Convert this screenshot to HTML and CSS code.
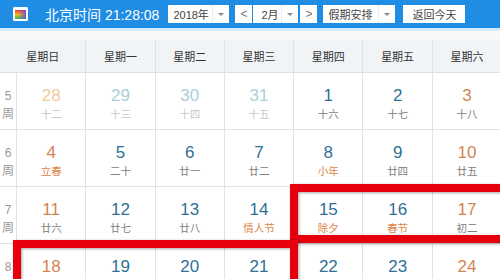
FILE: index.html
```html
<!DOCTYPE html>
<html lang="zh-CN">
<head>
    <meta charset="UTF-8">
    <meta name="viewport" content="width=device-width, initial-scale=1.0">
    <title>万年历</title>
    <link rel="stylesheet" href="styles.css">
</head>
<body>
    <div class="page">
        <div class="topbar">
            <svg class="logo" viewBox="0 0 15 14">
                <defs>
                    <linearGradient id="lg-v" x1="0" y1="0" x2="0" y2="1">
                        <stop offset="0" stop-color="#ef3550"/>
                        <stop offset="0.5" stop-color="#f6b81a"/>
                        <stop offset="1" stop-color="#33b65a"/>
                    </linearGradient>
                    <linearGradient id="lg-h" x1="0" y1="0" x2="1" y2="0">
                        <stop offset="0.3" stop-color="#5a4fe0" stop-opacity="0"/>
                        <stop offset="1" stop-color="#5a4fe0" stop-opacity="0.85"/>
                    </linearGradient>
                </defs>
                <rect x="0" y="0" width="15" height="14" rx="1.5" fill="#fff"/>
                <rect x="2" y="3" width="11" height="9" fill="url(#lg-v)"/>
                <rect x="2" y="3" width="11" height="9" fill="url(#lg-h)"/>
            </svg>
            <span class="clock">北京时间 21:28:08</span>

            <div class="select year">
                <span class="val">2018年</span>
                <span class="arrow"></span>
            </div>

            <div class="month-group">
                <button class="nav">&lt;</button>
                <div class="select month">
                    <span class="val">2月</span>
                    <span class="arrow"></span>
                </div>
                <button class="nav">&gt;</button>
            </div>

            <div class="select holiday">
                <span class="val">假期安排</span>
                <span class="arrow"></span>
            </div>

            <button class="today">返回今天</button>
        </div>

        <div class="strip"></div>

        <div class="calendar">
            <div class="weekdays">
                <div>星期日</div>
                <div>星期一</div>
                <div>星期二</div>
                <div>星期三</div>
                <div>星期四</div>
                <div>星期五</div>
                <div>星期六</div>
            </div>

            <div class="week">
                <div class="weeknum"><span>5</span><span>周</span></div>
                <div class="day weekend other"><div class="num">28</div><div class="lunar">十二</div></div>
                <div class="day other"><div class="num">29</div><div class="lunar">十三</div></div>
                <div class="day other"><div class="num">30</div><div class="lunar">十四</div></div>
                <div class="day other"><div class="num">31</div><div class="lunar">十五</div></div>
                <div class="day"><div class="num">1</div><div class="lunar">十六</div></div>
                <div class="day"><div class="num">2</div><div class="lunar">十七</div></div>
                <div class="day weekend"><div class="num">3</div><div class="lunar">十八</div></div>
            </div>

            <div class="week">
                <div class="weeknum"><span>6</span><span>周</span></div>
                <div class="day weekend"><div class="num">4</div><div class="lunar fest">立春</div></div>
                <div class="day"><div class="num">5</div><div class="lunar">二十</div></div>
                <div class="day"><div class="num">6</div><div class="lunar">廿一</div></div>
                <div class="day"><div class="num">7</div><div class="lunar">廿二</div></div>
                <div class="day"><div class="num">8</div><div class="lunar fest">小年</div></div>
                <div class="day"><div class="num">9</div><div class="lunar">廿四</div></div>
                <div class="day weekend"><div class="num">10</div><div class="lunar">廿五</div></div>
            </div>

            <div class="week">
                <div class="weeknum"><span>7</span><span>周</span></div>
                <div class="day weekend"><div class="num">11</div><div class="lunar">廿六</div></div>
                <div class="day"><div class="num">12</div><div class="lunar">廿七</div></div>
                <div class="day"><div class="num">13</div><div class="lunar">廿八</div></div>
                <div class="day"><div class="num">14</div><div class="lunar fest">情人节</div></div>
                <div class="day"><div class="num">15</div><div class="lunar fest">除夕</div></div>
                <div class="day"><div class="num">16</div><div class="lunar fest">春节</div></div>
                <div class="day weekend"><div class="num">17</div><div class="lunar">初二</div></div>
            </div>

            <!-- last row is cut by the window, only the numbers show -->
            <div class="week">
                <div class="weeknum"><span>8</span></div>
                <div class="day weekend"><div class="num">18</div></div>
                <div class="day"><div class="num">19</div></div>
                <div class="day"><div class="num">20</div></div>
                <div class="day"><div class="num">21</div></div>
                <div class="day"><div class="num">22</div></div>
                <div class="day"><div class="num">23</div></div>
                <div class="day weekend"><div class="num">24</div></div>
            </div>
        </div>

        <!-- red annotation boxes drawn over the calendar -->
        <div class="mark mark-top"></div>
        <div class="mark mark-bottom"></div>
    </div>
</body>
</html>
```

FILE: styles.css
```css
body {
    margin: 0;
    font-family: "Liberation Sans", "Noto Sans CJK SC", sans-serif;
    background-color: #fff;
    overflow: hidden;
}

.page {
    position: relative;
    width: 500px;
    height: 279px;
    overflow: hidden;
}

.topbar {
    display: flex;
    align-items: center;
    height: 28px;
    padding-left: 13px;
    background-color: #1f8de4;
}

.logo {
    width: 15px;
    height: 14px;
    margin-right: 17px;
    flex: none;
}

.clock {
    color: #fff;
    font-size: 14px;
    white-space: nowrap;
    margin-right: 9px;
}

.select {
    display: flex;
    align-items: center;
    justify-content: space-between;
    height: 18px;
    background-color: #fff;
    font-size: 11px;
    color: #444;
    flex: none;
    box-sizing: border-box;
}

.select .val {
    padding-left: 5px;
    white-space: nowrap;
}

.select .arrow {
    display: flex;
    align-items: center;
    justify-content: center;
    width: 17px;
    height: 18px;
    border-left: 1px solid #ececec;
    box-sizing: border-box;
}

.select .arrow::after {
    content: "";
    border-left: 3px solid transparent;
    border-right: 3px solid transparent;
    border-top: 3px solid #8a8a8a;
}

.year {
    width: 61px;
    margin-right: 6px;
}

.month-group {
    display: flex;
    margin-right: 6px;
}

.month {
    width: 45px;
    margin: 0 2px 0 1px;
}

.month .val {
    padding-left: 8px;
}

.nav {
    width: 17px;
    height: 18px;
    padding: 0;
    border: none;
    background-color: #fff;
    color: #777;
    font-family: inherit;
    font-size: 12px;
}

.holiday {
    width: 72px;
    margin-right: 8px;
}

.today {
    width: 62px;
    height: 18px;
    padding: 0;
    border: none;
    background-color: #fff;
    color: #444;
    font-family: inherit;
    font-size: 11px;
}

.strip {
    height: 9px;
    border-top: 3px solid #d4ebfa;
    background-color: #f6f8fa;
}

.calendar {
    width: 501px;
}

.weekdays {
    display: grid;
    grid-template-columns: 85.3px repeat(6, 69.3px);
    height: 33px;
    background-color: #f1f4f7;
    border-bottom: 1px solid #dcdfe3;
    box-sizing: border-box;
}

.weekdays div {
    display: flex;
    align-items: center;
    justify-content: center;
    font-size: 11px;
    color: #333;
    border-left: 1px solid #dde1e6;
}

.weekdays div:first-child {
    border-left: none;
}

.week {
    display: grid;
    grid-template-columns: 16px repeat(7, 69.3px);
    height: 57px;
    border-bottom: 1px solid #e2e2e2;
    box-sizing: border-box;
}

.weeknum {
    display: flex;
    flex-direction: column;
    align-items: center;
    padding-top: 14px;
    font-size: 12px;
    line-height: 18px;
    color: #999;
}

.day {
    border-left: 1px solid #e2e2e2;
    text-align: center;
    padding-top: 13px;
}

.num {
    font-size: 17px;
    line-height: 20px;
    color: #2f7196;
}

.lunar {
    font-size: 10.5px;
    line-height: 16px;
    color: #808080;
}

.weekend .num {
    color: #d3854f;
}

.lunar.fest {
    color: #dd8444;
}

.other .num {
    color: #a9cdd9;
}

.other.weekend .num {
    color: #f2c89a;
}

.other .lunar {
    color: #c8c8c8;
}

.mark {
    position: absolute;
    border: 8px solid #e6000d;
    box-sizing: border-box;
    box-shadow: 1px 1px 3px rgba(0, 0, 0, 0.35), inset 1px 1px 3px rgba(0, 0, 0, 0.35);
}

.mark-top {
    left: 290px;
    top: 184px;
    width: 240px;
    height: 59px;
}

.mark-bottom {
    left: 13px;
    top: 240px;
    width: 285px;
    height: 100px;
}
```
